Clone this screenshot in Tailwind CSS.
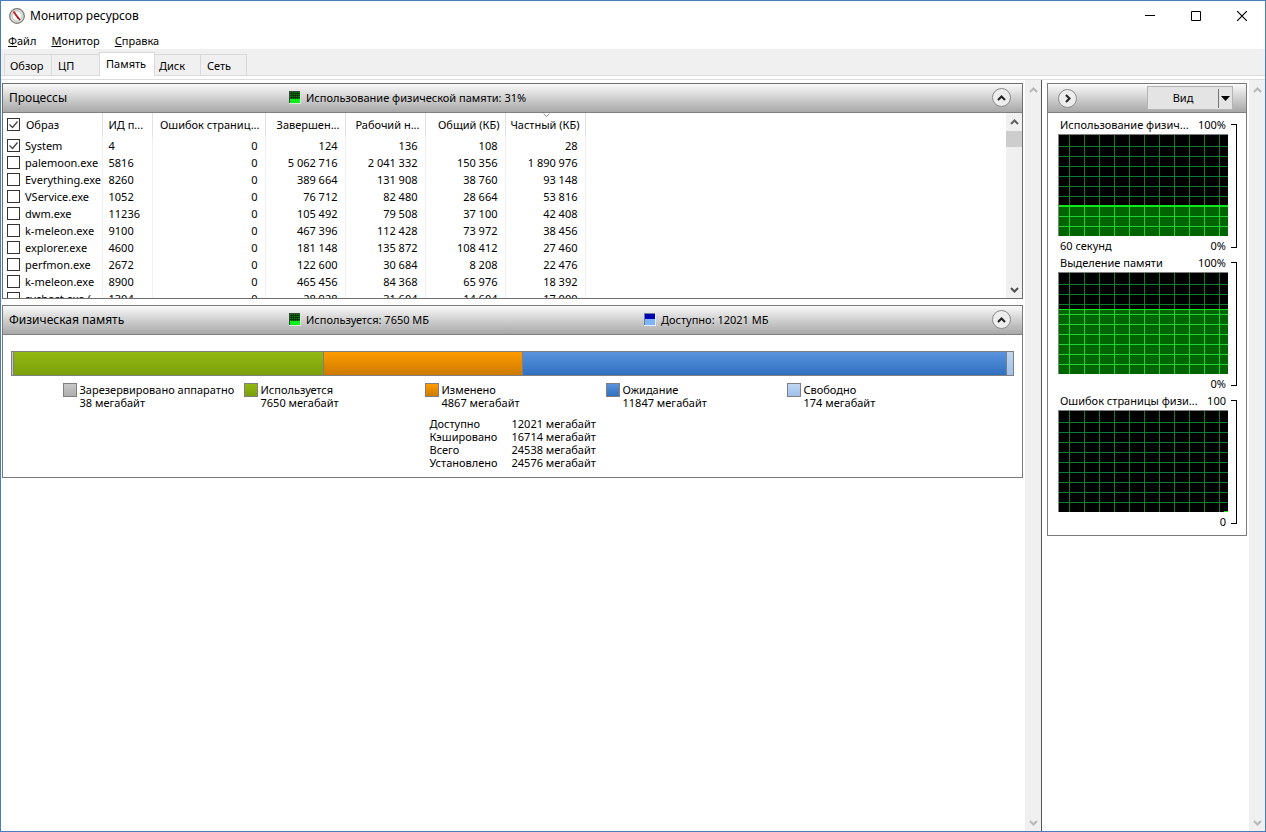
<!DOCTYPE html>
<html lang="ru">
<head>
<meta charset="utf-8">
<title>Монитор ресурсов</title>
<script src="https://cdn.jsdelivr.net/npm/@tailwindcss/browser@4"></script>
</head>
<body class="h-screen overflow-hidden bg-white font-['Noto_Sans','Open_Sans',sans-serif] text-[11px] leading-[13px] text-black">
<svg class="absolute h-0 w-0" aria-hidden="true">
  <defs>
    <pattern id="dim" width="15" height="101" patternUnits="userSpaceOnUse" x="10" y="0"><path d="M0 11.500H15M0 21.500H15M0 31.500H15M0 41.500H15M0 51.500H15M0 61.500H15M0 71.500H15M0 81.500H15M0 91.500H15M.5 0V101" stroke="#0c7d2c" fill="none"/></pattern>
    <pattern id="lit" width="15" height="10" patternUnits="userSpaceOnUse" x="10" y="11"><path d="M0 .5H15M.5 0V10" stroke="#1fd42c" fill="none"/></pattern>
    <symbol id="up" viewBox="0 0 9 6"><path d="M1 5 4.500 1.500 8 5" fill="none" stroke="currentColor" stroke-width="2"/></symbol>
    <symbol id="down" viewBox="0 0 9 6"><path d="M1 1 4.500 4.500 8 1" fill="none" stroke="currentColor" stroke-width="2"/></symbol>
    <symbol id="green" viewBox="0 0 12 13"><path d="M0 0h12v13H0z" fill="#d8ead8"/><path d="M0 0h11v12H0z" fill="#3a4a3a"/><path d="M1 1h10v7H1z" fill="#0a7c0a"/><path d="M1 2.500h10M1 4.500h10M1 6.500h10M2.500 1v7M4.500 1v7M6.500 1v7M8.500 1v7" stroke="#032803" stroke-width=".7"/><path d="M1 8h10v4H1z" fill="#0cf01c"/></symbol>
    <symbol id="blue" viewBox="0 0 12 13"><path d="M0 0h12v13H0z" fill="#e4eefa"/><path d="M0 0h11v12H0z" fill="#6d7fa0"/><path d="M1 1h10v5H1z" fill="#0000b4"/><path d="M1 6h10v6H1z" fill="#80b4f8"/></symbol>
  </defs>
</svg>
<div class="flex h-full flex-col border border-[#4a7ebb]">
  <header class="flex h-[29px] items-center pl-2">
    <svg class="h-4 w-4" viewBox="0 0 16 16"><circle cx="8" cy="8" r="7.300" fill="#e4e4e0" stroke="#77776f" stroke-width="1.200"/><circle cx="8" cy="8" r="5" fill="#fff" stroke="#b0b0a8" stroke-width=".8"/><path d="M4.500 3.500 9.500 10.500" stroke="#c4202a" stroke-width="2"/><path d="M9 9.500 11 12" stroke="#7a2020" stroke-width="1.500"/></svg>
    <h1 class="ml-[5px] flex-1 text-[12px] leading-4">Монитор ресурсов</h1>
    <button aria-label="Свернуть" class="flex h-7 w-[46px] items-center justify-center"><svg class="h-[10px] w-[10px]" viewBox="0 0 10 10"><path d="M0 4.500h10" stroke="#000"/></svg></button>
    <button aria-label="Развернуть" class="flex h-7 w-[46px] items-center justify-center"><svg class="h-[10px] w-[10px]" viewBox="0 0 10 10"><path d="M.5.5h9v9h-9z" fill="none" stroke="#000"/></svg></button>
    <button aria-label="Закрыть" class="flex h-7 w-[46px] items-center justify-center"><svg class="h-[10px] w-[10px]" viewBox="0 0 10 10"><path d="m0 0 10 10M10 0 0 10" stroke="#000" stroke-width="1.200"/></svg></button>
  </header>
  <nav class="flex h-[19px] items-center gap-[15px] pt-[2px] pl-[7px]">
    <button><u>Ф</u>айл</button><button><u>М</u>онитор</button><button><u>С</u>правка</button>
  </nav>
  <div role="tablist" class="flex h-[27px] items-end border-b border-[#d9d9d9] bg-[#f0f0f0] pl-[3px]">
    <button role="tab" class="h-[21px] w-[48px] border border-b-0 border-[#d9d9d9] pl-[5px] text-left">Обзор</button>
    <button role="tab" class="h-[21px] w-[47px] border-t border-[#d9d9d9] pl-[6px] text-left">ЦП</button>
    <button role="tab" aria-selected="true" class="-mb-px h-[24px] w-[56px] border border-b-0 border-[#d9d9d9] bg-white pb-[2px] pl-[6px] text-left">Память</button>
    <button role="tab" class="h-[21px] w-[46px] border-t border-r border-[#d9d9d9] pl-1 text-left">Диск</button>
    <button role="tab" class="h-[21px] w-[46px] border-t border-r border-[#d9d9d9] pl-[6px] text-left">Сеть</button>
  </div>
  <div class="h-1 border-b border-[#dcdcdc]"></div>

  <div class="flex min-h-0 flex-1">
    <main class="flex min-w-0 flex-1 flex-col gap-[6px] px-px pr-[2px] pt-[3px]">
      <section class="flex h-[216px] flex-col border border-[#6e6e6e]">
        <div class="flex h-[29px] shrink-0 items-center border-b border-[#7f7f7f] bg-linear-to-b from-[#fafafa] to-[#a8a8a8] pr-[11px] pb-px pl-[6px]">
          <h2 class="w-[280px] text-[12px]">Процессы</h2>
          <svg class="h-[13px] w-3"><use href="#green"/></svg>
          <span class="ml-[5px] flex-1">Использование физической памяти: 31%</span>
          <button aria-label="Свернуть раздел" class="flex h-[19px] w-[19px] items-center justify-center rounded-full border border-[#8a8a8a] bg-[#ededed]"><svg class="h-[6px] w-[9px] text-[#222]"><use href="#up"/></svg></button>
        </div>
        <div class="flex min-h-0 flex-1">
          <div class="min-w-0 flex-1 overflow-hidden">
            <table class="w-[582px] table-fixed border-collapse whitespace-nowrap">
              <colgroup><col class="w-[99px]"><col class="w-[50px]"><col class="w-[113px]"><col class="w-[80px]"><col class="w-[80px]"><col class="w-[80px]"><col class="w-[80px]"></colgroup>
              <thead>
                <tr class="h-[24px] *:border-r *:border-[#e2e2e2] *:p-0 *:pb-px *:font-normal">
                  <th class="text-left"><label class="flex items-center pl-1"><input type="checkbox" checked class="h-[13px] w-[13px] shrink-0 appearance-none border border-[#333] bg-white"><svg class="-ml-[11px] h-[9px] w-[9px]" viewBox="0 0 9 9"><path d="m.5 4.500 3 3 5-6" fill="none" stroke="#444" stroke-width="1.300"/></svg><span class="ml-2">Образ</span></label></th>
                  <th class="text-left"><span class="pl-[6px]">ИД п...</span></th>
                  <th class="text-right"><span class="pr-[5px]">Ошибок страниц...</span></th>
                  <th class="text-right"><span class="pr-[5px]">Завершен...</span></th>
                  <th class="text-right"><span class="pr-[5px]">Рабочий н...</span></th>
                  <th class="text-right"><span class="pr-[5px]">Общий (КБ)</span></th>
                  <th class="relative text-right"><svg class="absolute top-0 left-[37px] h-1 w-[7px]" viewBox="0 0 7 4"><path d="m.5 .5 3 3 3-3" fill="none" stroke="#888"/></svg><span class="pr-[5px]">Частный (КБ)</span></th>
                </tr>
              </thead>
              <tbody id="rows"></tbody>
            </table>
          </div>
          <div class="flex w-[16px] flex-col items-center bg-[#f0f0f0]">
            <svg class="my-[6px] h-[6px] w-[9px] shrink-0 text-[#606060]"><use href="#up"/></svg>
            <div class="h-[16px] w-full bg-[#cdcdcd]"></div>
            <svg class="mt-auto mb-[5px] h-[6px] w-[9px] shrink-0 text-[#505050]"><use href="#down"/></svg>
          </div>
        </div>
      </section>

      <section class="flex h-[173px] flex-col border border-[#7a7a7a]">
        <div class="flex h-[29px] shrink-0 items-center border-b border-[#7f7f7f] bg-linear-to-b from-[#fafafa] to-[#a8a8a8] pr-[11px] pb-px pl-[6px]">
          <h2 class="w-[280px] text-[12px]">Физическая память</h2>
          <svg class="h-[13px] w-3"><use href="#green"/></svg>
          <span class="ml-[5px] w-[338px]">Используется: 7650 МБ</span>
          <svg class="h-[13px] w-3"><use href="#blue"/></svg>
          <span class="ml-[5px] flex-1">Доступно: 12021 МБ</span>
          <button aria-label="Свернуть раздел" class="flex h-[19px] w-[19px] items-center justify-center rounded-full border border-[#8a8a8a] bg-[#ededed]"><svg class="h-[6px] w-[9px] text-[#222]"><use href="#up"/></svg></button>
        </div>
        <div class="mx-2 mt-4 flex h-[25px] border border-[#808080] *:border-r *:border-[#808080]">
          <div class="bg-[#c8c8c8]" style="width:0.2%"></div>
          <div class="bg-linear-to-b from-[#92b812] to-[#7ba00a]" style="width:31%"></div>
          <div class="bg-linear-to-b from-[#ff9c00] to-[#cc7a00]" style="width:19.9%"></div>
          <div class="bg-linear-to-b from-[#5b93dd] to-[#2f70c0]" style="width:48.3%"></div>
          <div class="flex-1 border-r-0! bg-linear-to-b from-[#c0d6f2] to-[#9fc0ec]"></div>
        </div>
        <ul class="mt-[7px] flex justify-center pl-[5px] whitespace-nowrap *:flex *:w-[181px] *:gap-[3px]">
          <li><i class="h-[14px] w-[14px] border border-[#808080] bg-linear-to-b from-[#c8c8c8] to-[#adadad]"></i><p>Зарезервировано аппаратно<br>38 мегабайт</p></li>
          <li><i class="h-[14px] w-[14px] border border-[#808080] bg-linear-to-b from-[#92b812] to-[#7ba00a]"></i><p>Используется<br>7650 мегабайт</p></li>
          <li><i class="h-[14px] w-[14px] border border-[#808080] bg-linear-to-b from-[#ff9c00] to-[#cc7a00]"></i><p>Изменено<br>4867 мегабайт</p></li>
          <li><i class="h-[14px] w-[14px] border border-[#808080] bg-linear-to-b from-[#5b93dd] to-[#2f70c0]"></i><p>Ожидание<br>11847 мегабайт</p></li>
          <li><i class="h-[14px] w-[14px] border border-[#808080] bg-linear-to-b from-[#c0d6f2] to-[#9fc0ec]"></i><p>Свободно<br>174 мегабайт</p></li>
        </ul>
        <dl class="mt-2 grid grid-cols-[82px_84px] justify-center whitespace-nowrap">
          <dt>Доступно</dt><dd>12021 мегабайт</dd>
          <dt>Кэшировано</dt><dd>16714 мегабайт</dd>
          <dt>Всего</dt><dd>24538 мегабайт</dd>
          <dt>Установлено</dt><dd>24576 мегабайт</dd>
        </dl>
      </section>
    </main>
    <div class="flex w-4 flex-col items-center justify-between bg-[#f0f0f0] pt-[7px] pb-[5px] text-[#b8b8b8]">
      <svg class="h-[6px] w-[9px]"><use href="#up"/></svg>
      <svg class="h-[6px] w-[9px]"><use href="#down"/></svg>
    </div>

    <aside class="w-[208px] border-l border-[#555] pt-[3px] pr-[2px] pl-[5px]">
      <section class="border border-[#7a7a7a] pb-[5px]">
        <div class="mb-[2px] flex h-[29px] items-center border-b border-[#7f7f7f] bg-linear-to-b from-[#fafafa] to-[#a8a8a8] pr-[13px] pl-[10px]">
          <button aria-label="Скрыть графики" class="flex h-[19px] w-[19px] items-center justify-center rounded-full border border-[#8a8a8a] bg-[#ededed]"><svg class="h-[9px] w-[6px]" viewBox="0 0 6 9"><path d="m1 1 3.500 3.500L1 8" fill="none" stroke="#222" stroke-width="2"/></svg></button>
          <button class="ml-auto flex h-[24px] w-[86px] items-center border border-[#b4b4b4] bg-[#e4e4e4]"><span class="flex-1 pb-px text-center">Вид</span><span class="flex h-[19px] w-[14px] items-center justify-center border-l border-[#777]"><svg class="h-[5px] w-[9px]" viewBox="0 0 9 5"><path d="M0 0h9L4.500 5z"/></svg></span></button>
        </div>
        <div class="flex h-[138px] pr-[9px] pl-[10px]">
          <figure class="w-[170px]">
            <figcaption class="flex h-[19px] items-center justify-between px-[2px] pb-px whitespace-nowrap"><span>Использование физич...</span><span>100%</span></figcaption>
            <svg class="h-[102px] w-full border-t border-l border-[#808080] bg-black"><rect width="100%" height="100%" fill="url(#dim)"/><rect y="70" width="100%" height="31" fill="#006400"/><rect y="70" width="100%" height="31" fill="url(#lit)"/><path d="M0 71H170" stroke="#10e81c" stroke-width="2"/></svg>
            <div class="flex h-[18px] items-center justify-between px-[2px]"><span>60 секунд</span><span>0%</span></div>
          </figure>
          <div class="mt-[9px] mb-[5px] ml-[3px] w-[6px] border border-l-0 border-black"></div>
        </div>
        <div class="flex h-[138px] pr-[9px] pl-[10px]">
          <figure class="w-[170px]">
            <figcaption class="flex h-[19px] items-center justify-between px-[2px] pb-px whitespace-nowrap"><span>Выделение памяти</span><span>100%</span></figcaption>
            <svg class="h-[102px] w-full border-t border-l border-[#808080] bg-black"><rect width="100%" height="100%" fill="url(#dim)"/><rect y="36" width="100%" height="65" fill="#006400"/><rect y="36" width="100%" height="65" fill="url(#lit)"/><path d="M0 36.500H170" stroke="#10e81c"/></svg>
            <div class="flex h-[18px] items-center justify-end px-[2px]"><span>0%</span></div>
          </figure>
          <div class="mt-[9px] mb-[5px] ml-[3px] w-[6px] border border-l-0 border-black"></div>
        </div>
        <div class="flex h-[139px] pr-[9px] pl-[10px]">
          <figure class="w-[170px]">
            <figcaption class="flex h-[19px] items-center justify-between px-[2px] pb-px whitespace-nowrap"><span>Ошибок страницы физи...</span><span>100</span></figcaption>
            <svg class="h-[102px] w-full border-t border-l border-[#808080] bg-black"><rect width="100%" height="100%" fill="url(#dim)"/><path d="M165 100.500H169" stroke="#10e81c"/></svg>
            <div class="flex h-[18px] items-center justify-end px-[2px]"><span>0</span></div>
          </figure>
          <div class="mt-[9px] mb-[6px] ml-[3px] w-[6px] border border-l-0 border-black"></div>
        </div>
      </section>
    </aside>
    <div class="flex w-4 flex-col items-center justify-between bg-[#f0f0f0] pt-[7px] pb-[5px] text-[#b8b8b8]">
      <svg class="h-[6px] w-[9px]"><use href="#up"/></svg>
      <svg class="h-[6px] w-[9px]"><use href="#down"/></svg>
    </div>
  </div>
</div>
<script>
const processes = [
  ["System","4","0","124","136","108","28"],
  ["palemoon.exe","5816","0","5 062 716","2 041 332","150 356","1 890 976"],
  ["Everything.exe","8260","0","389 664","131 908","38 760","93 148"],
  ["VService.exe","1052","0","76 712","82 480","28 664","53 816"],
  ["dwm.exe","11236","0","105 492","79 508","37 100","42 408"],
  ["k-meleon.exe","9100","0","467 396","112 428","73 972","38 456"],
  ["explorer.exe","4600","0","181 148","135 872","108 412","27 460"],
  ["perfmon.exe","2672","0","122 600","30 684","8 208","22 476"],
  ["k-meleon.exe","8900","0","465 456","84 368","65 976","18 392"],
  ["svchost.exe (...","1304","0","28 928","31 604","14 604","17 000"]
];
document.getElementById("rows").innerHTML = processes.map(([name, pid, ...values], i) => `
  <tr class="h-[17px] *:border-r *:border-[#f0f0f4] *:p-0">
    <td class="overflow-hidden"><label class="flex items-center pl-1"><input type="checkbox" ${i ? "" : "checked"} class="h-[13px] w-[13px] shrink-0 appearance-none border border-[#333] bg-white"><svg class="-ml-[11px] h-[9px] w-[9px] shrink-0" viewBox="0 0 9 9">${i ? "" : '<path d="m.5 4.500 3 3 5-6" fill="none" stroke="#444" stroke-width="1.300"/>'}</svg><span class="ml-[7px]">${name}</span></label></td>
    <td class="text-left"><span class="pl-[6px]">${pid}</span></td>
    ${values.map(v => `<td class="text-right"><span class="pr-[7px]">${v}</span></td>`).join("")}
  </tr>`).join("");
</script>
</body>
</html>
